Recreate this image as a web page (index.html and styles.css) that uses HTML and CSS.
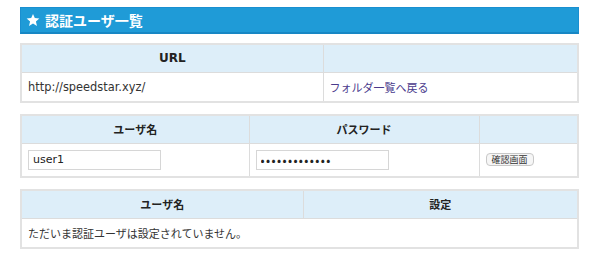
FILE: index.html
```html
<!DOCTYPE html>
<html lang="ja">

<head>
    <meta charset="UTF-8">
    <meta name="viewport" content="width=device-width, initial-scale=1.0">
    <title>認証ユーザ一覧</title>
    <link rel="stylesheet" href="styles.css">
</head>

<body>

    <div class="wrap">
        <h2 class="title">
            <svg class="star" width="14" height="14" viewBox="0 0 24 24">
                <path d="M12 1.5l3.1 7.2 7.8.7-5.9 5.2 1.8 7.7L12 18.2l-6.8 4.1 1.8-7.7-5.9-5.2 7.8-.7z" fill="#fff" />
            </svg>
            認証ユーザ一覧
        </h2>

        <table class="list t-url">
            <tr>
                <th class="c-url">URL</th>
                <th></th>
            </tr>
            <tr>
                <td class="url">http://speedstar.xyz/</td>
                <td><a href="#" class="back">フォルダ一覧へ戻る</a></td>
            </tr>
        </table>

        <table class="list t-add">
            <tr>
                <th class="c-user">ユーザ名</th>
                <th class="c-pass">パスワード</th>
                <th></th>
            </tr>
            <tr>
                <td><input type="text" class="field" value="user1"></td>
                <td><input type="password" class="field pass" value="abcdefghijklm"></td>
                <td><button class="confirm">確認画面</button></td>
            </tr>
        </table>

        <table class="list t-users">
            <tr>
                <th class="c-name">ユーザ名</th>
                <th>設定</th>
            </tr>
            <tr>
                <td colspan="2">ただいま認証ユーザは設定されていません。</td>
            </tr>
        </table>
    </div>

</body>

</html>
```

FILE: styles.css
```css
* {
    margin: 0;
    padding: 0;
    box-sizing: border-box;
}

body {
    font-family: "DejaVu Sans", "Noto Sans CJK JP", sans-serif;
    font-size: 11px;
    color: #333;
    background: #fff;
}

.wrap {
    width: 559px;
    margin: 7px 0 0 20px;
}

.title {
    display: flex;
    align-items: center;
    gap: 5px;
    height: 27px;
    padding-left: 5px;
    background: #1f9bd7;
    border: 1px solid #1a8fd0;
    border-bottom: 2px solid #1787c4;
    color: #fff;
    font-size: 14px;
    font-weight: bold;
    margin-bottom: 9px;
}

.list {
    width: 100%;
    border-collapse: collapse;
    border: 2px solid #e2e2e2;
    margin-bottom: 11px;
}

.list th,
.list td {
    border: 1px solid #dcdcdc;
    padding: 0 6px;
    text-align: left;
}

.list th {
    background: #ddeef9;
    height: 28px;
    font-weight: bold;
    text-align: center;
    color: #222;
}

.list td {
    height: 30px;
}

.list td.url {
    font-size: 11.4px;
}

.t-add td {
    height: 34px;
}

.c-url {
    width: 302px;
    font-size: 12px;
}

.c-user {
    width: 228px;
}

.c-pass {
    width: 230px;
}

.c-name {
    width: 282px;
}

.back {
    color: #4a3a8c;
    text-decoration: none;
}

.field {
    width: 133px;
    height: 20px;
    border: 1px solid #d6d6d6;
    padding: 0 4px;
    font-family: inherit;
    font-size: 11px;
    color: #222;
}

.field.pass {
    font-family: "Noto Sans CJK JP", sans-serif;
    font-size: 12px;
    letter-spacing: 1.4px;
}

.confirm {
    width: 48px;
    height: 13px;
    border: 1px solid #c8c8c8;
    border-radius: 4px;
    background: #f6f6f6;
    font-family: "Noto Sans CJK JP", sans-serif;
    font-size: 9px;
    line-height: 11px;
    color: #333;
}
```
